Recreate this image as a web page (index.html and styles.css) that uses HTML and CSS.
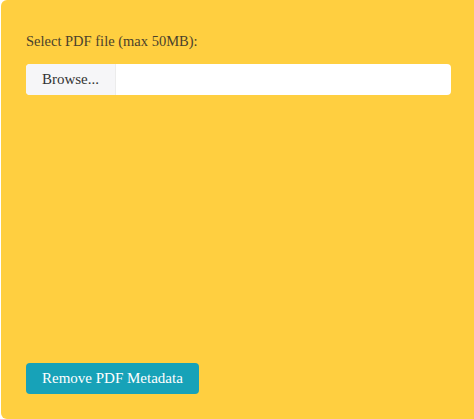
FILE: index.html
```html
<!DOCTYPE html>
<html lang="en">

<head>
    <meta charset="UTF-8">
    <meta name="viewport" content="width=device-width, initial-scale=1.0">
    <title>Remove PDF Metadata</title>
    <link rel="stylesheet" href="styles.css">
</head>

<body>
    <form class="tool-card">
        <label class="field-label" for="pdf-file">Select PDF file (max 50MB):</label>
        <div class="file-input">
            <span class="browse-btn">Browse...</span>
            <span class="file-name"></span>
        </div>
        <button type="button" class="submit-btn">Remove PDF Metadata</button>
    </form>
</body>

</html>
```

FILE: styles.css
```css
body {
    margin: 0;
    background: #fff;
    font-family: 'Liberation Serif', 'DejaVu Serif', serif;
}

.tool-card {
    box-sizing: border-box;
    height: 419px;
    margin-left: 1px;
    padding: 31px 25px 25px 25px;
    background-color: #ffcf40;
    border-radius: 6px 0 0 6px;
    display: flex;
    flex-direction: column;
    align-items: flex-start;
}

.field-label {
    font-size: 14.5px;
    color: #4a412c;
    line-height: 20px;
    margin-bottom: 13px;
}

.file-input {
    align-self: stretch;
    margin-right: -2px;
    display: flex;
    height: 31px;
    background: #fff;
    border-radius: 4px;
    overflow: hidden;
}

.browse-btn {
    width: 89px;
    background: #f6f6f8;
    border-right: 1px solid #ececec;
    color: #333;
    font-size: 15px;
    display: flex;
    align-items: center;
    justify-content: center;
}

.file-name {
    flex: 1;
}

.submit-btn {
    margin-top: auto;
    height: 31px;
    padding: 0 16px;
    border: none;
    border-radius: 4px;
    background-color: #17a2b8;
    color: #fff;
    font-family: 'Liberation Serif', 'DejaVu Serif', serif;
    font-size: 15px;
}
```
